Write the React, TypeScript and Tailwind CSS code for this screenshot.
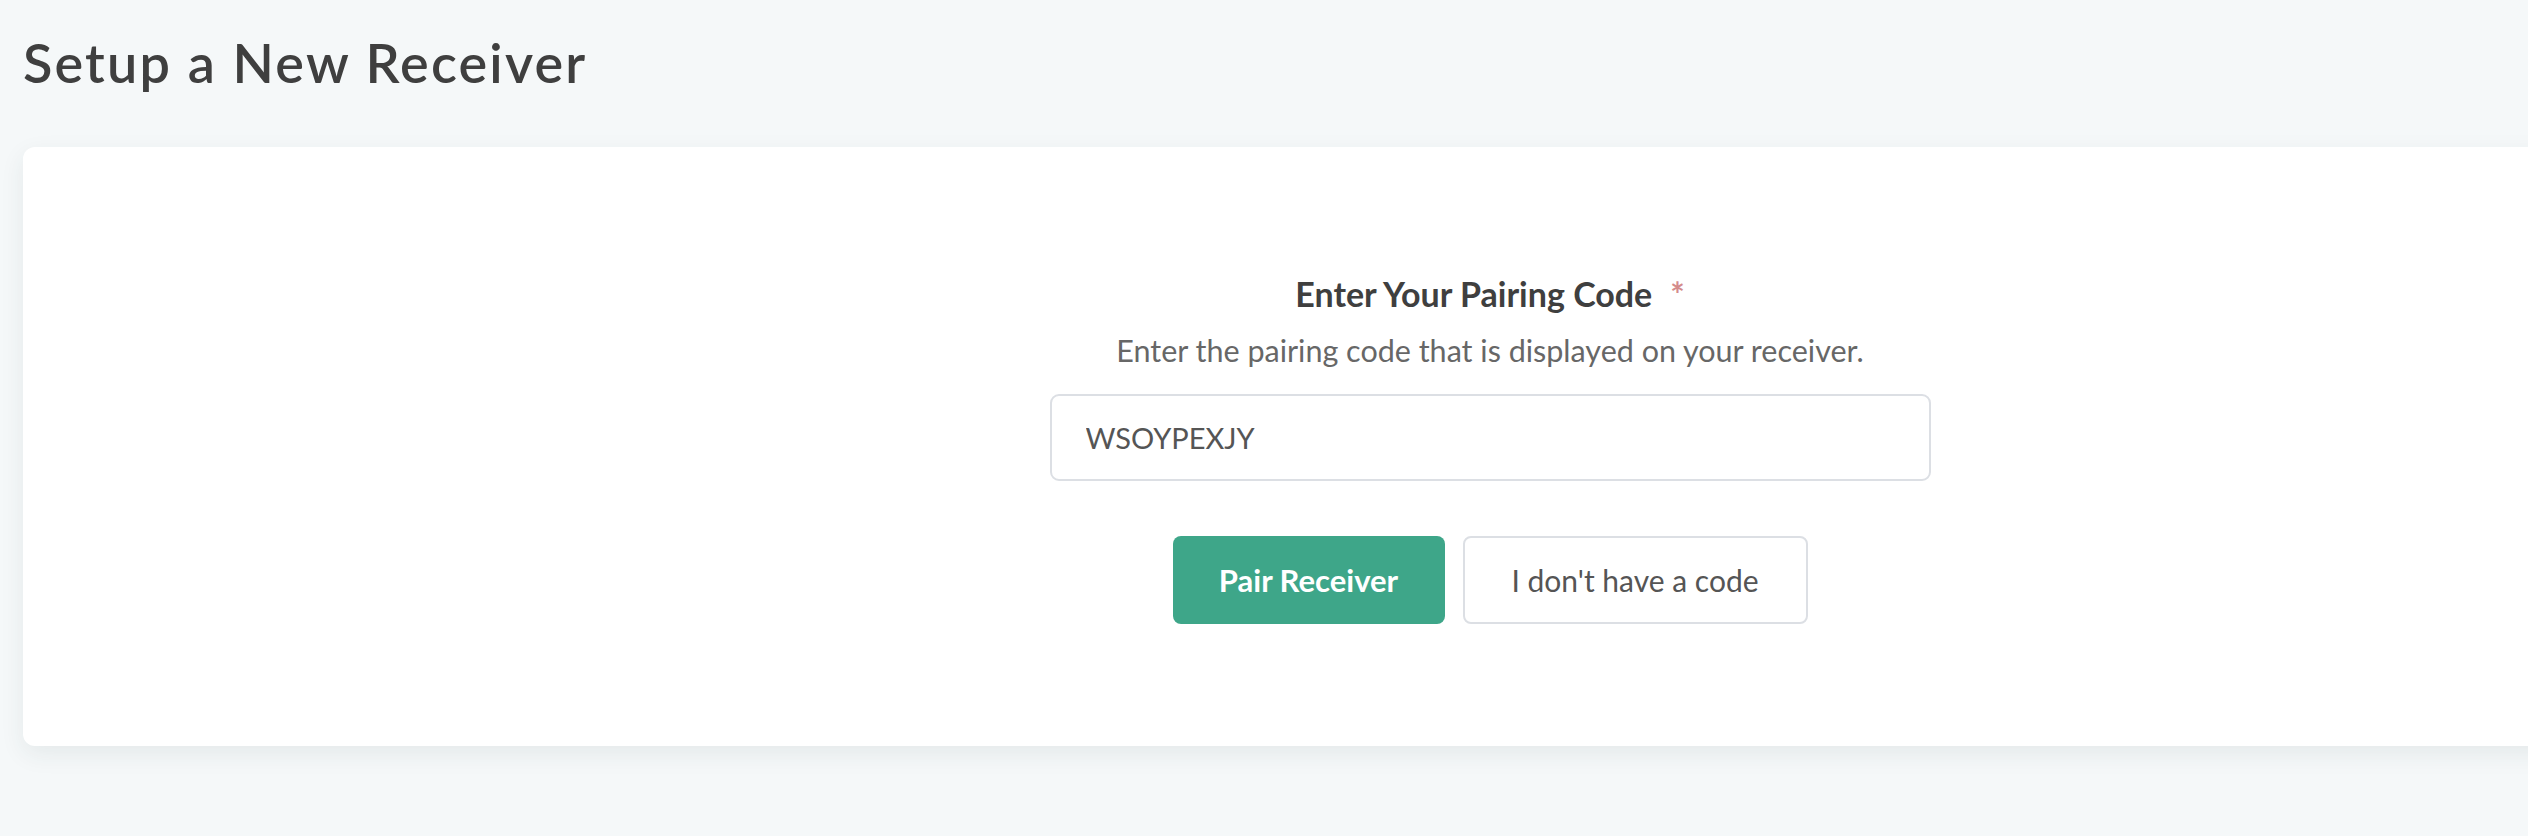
import React from 'react';

const font = { fontFamily: 'Lato, "Noto Sans", sans-serif' };

export default function App() {
  return (
    <div className="min-h-screen w-full overflow-hidden bg-[#f5f8f9]" style={font}>
      <div className="w-[2980px] px-[23px]">
        <h1 className="pt-[30px] pb-[51px] text-[54px] leading-[66px] font-semibold tracking-[0.04em] text-[#3f3f3f]">
          Setup a New Receiver
        </h1>

        <div className="h-[599px] rounded-[12px] bg-white shadow-[0_8px_24px_rgba(40,60,60,0.08)] flex flex-col items-center pt-[126px]">
          <label className="text-[34px] font-bold text-[#3f3f3f] leading-[42px]">
            Enter Your Pairing Code
            <span className="ml-[18px] text-[#d48b8b]">*</span>
          </label>
          <p className="mt-[16px] text-[30.5px] text-[#676767] leading-[38px]">
            Enter the pairing code that is displayed on your receiver.
          </p>

          <input
            type="text"
            defaultValue="WSOYPEXJY"
            className="mt-[25px] w-[881px] h-[87px] rounded-[9px] border-2 border-[#dcdfe4] bg-white px-[34px] text-[29px] text-[#555] outline-none"
          />

          <div className="mt-[55px] flex gap-[18px]">
            <button className="h-[88px] w-[272px] rounded-[8px] bg-[#3ea689] text-[31px] font-bold text-white">
              Pair Receiver
            </button>
            <button className="h-[88px] w-[345px] rounded-[8px] border-2 border-[#dcdfe4] bg-white text-[30px] text-[#555]">
              I don't have a code
            </button>
          </div>
        </div>
      </div>
    </div>
  );
}
